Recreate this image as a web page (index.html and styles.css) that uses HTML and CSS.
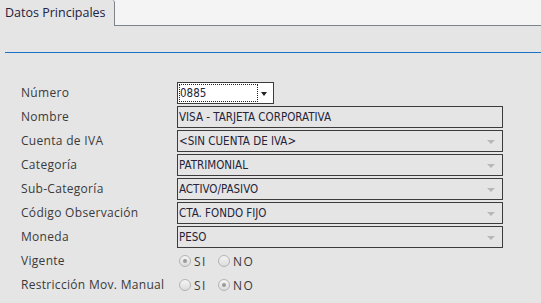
FILE: index.html
```html
<!DOCTYPE html>
<html lang="es">
  <head>
    <meta charset="UTF-8" />
    <title>Datos Principales</title>
    <link rel="stylesheet" href="styles.css">
  </head>
  <body>
    <div class="tabs">
      <div class="tab">Datos Principales</div>
      <div class="tab-rest"></div>
    </div>

    <div class="panel">
      <div class="rule"></div>

      <div class="form">
        <label>Número</label>
        <div class="field">
          <div class="combo">
            <span class="focus">0885</span>
            <span class="arrow dark"></span>
          </div>
        </div>

        <label>Nombre</label>
        <div class="field"><div class="box">VISA - TARJETA CORPORATIVA</div></div>

        <label>Cuenta de IVA</label>
        <div class="field"><div class="box select">&lt;SIN CUENTA DE IVA&gt;<span class="arrow"></span></div></div>

        <label>Categoría</label>
        <div class="field"><div class="box select">PATRIMONIAL<span class="arrow"></span></div></div>

        <label>Sub-Categoría</label>
        <div class="field"><div class="box select">ACTIVO/PASIVO<span class="arrow"></span></div></div>

        <label>Código Observación</label>
        <div class="field"><div class="box select">CTA. FONDO FIJO<span class="arrow"></span></div></div>

        <label>Moneda</label>
        <div class="field"><div class="box select">PESO<span class="arrow"></span></div></div>

        <label>Vigente</label>
        <div class="field radios">
          <span class="radio on"></span><span class="opt">SI</span>
          <span class="radio"></span><span class="opt">NO</span>
        </div>

        <label>Restricción Mov. Manual</label>
        <div class="field radios">
          <span class="radio"></span><span class="opt">SI</span>
          <span class="radio on"></span><span class="opt">NO</span>
        </div>
      </div>
    </div>
  </body>
</html>
```

FILE: styles.css
```css
* {
  box-sizing: border-box;
}
body {
  margin: 0;
  background-color: #e5e5e5;
  font-family: "Open Sans", "Noto Sans", sans-serif;
  font-size: 12px;
  color: #3a3a3a;
}
.tabs {
  display: flex;
  height: 26px;
  background-color: #f4f4f4;
}
.tab {
  width: 115px;
  padding: 4px 0 0 5px;
  background-color: #e5e5e5;
  border-right: 1px solid #7b858e;
  border-top-right-radius: 3px;
  font-size: 12.5px;
  color: #22223e;
}
.tab-rest {
  flex: 1;
  border-bottom: 1px solid #7b858e;
}
.panel {
  padding: 26px 0 0 5px;
}
.rule {
  height: 1px;
  background-color: #1a73c6;
}
.form {
  display: grid;
  grid-template-columns: 156px 326px;
  grid-auto-rows: 22px;
  row-gap: 2px;
  margin: 29px 0 0 16px;
}
label {
  display: flex;
  align-items: center;
  letter-spacing: 0.3px;
  padding-bottom: 1px;
}
.field {
  display: flex;
  align-items: center;
}
.box,
.combo {
  position: relative;
  height: 22px;
  width: 326px;
  border: 1px solid #3c3c3c;
  padding: 0 0 0 1px;
  display: flex;
  align-items: center;
  font-family: "DejaVu Sans Condensed", "DejaVu Sans", sans-serif;
  font-size: 11.5px;
  color: #24243a;
}
.combo {
  width: 97px;
  background-color: #fff;
}
.focus {
  width: 79px;
  height: 18px;
  border: 1px dotted #222;
  display: flex;
  align-items: center;
}
.arrow {
  position: absolute;
  right: 7px;
  top: 9px;
  border-left: 4px solid transparent;
  border-right: 4px solid transparent;
  border-top: 4px solid #b8b8b8;
}
.arrow.dark {
  right: 6px;
  border-left-width: 3px;
  border-right-width: 3px;
  border-top: 4px solid #222;
}
.radios {
  padding-left: 2px;
}
.radio {
  width: 12px;
  height: 12px;
  border-radius: 50%;
  border: 1px solid #b4b4b4;
  background: linear-gradient(#f4f4f4, #dcdcdc);
  display: flex;
  align-items: center;
  justify-content: center;
}
.radio.on::after {
  content: "";
  width: 4px;
  height: 4px;
  border-radius: 50%;
  background-color: #9a9a9a;
}
.opt {
  margin: 0 11px 0 3px;
  letter-spacing: 1.5px;
}
```
